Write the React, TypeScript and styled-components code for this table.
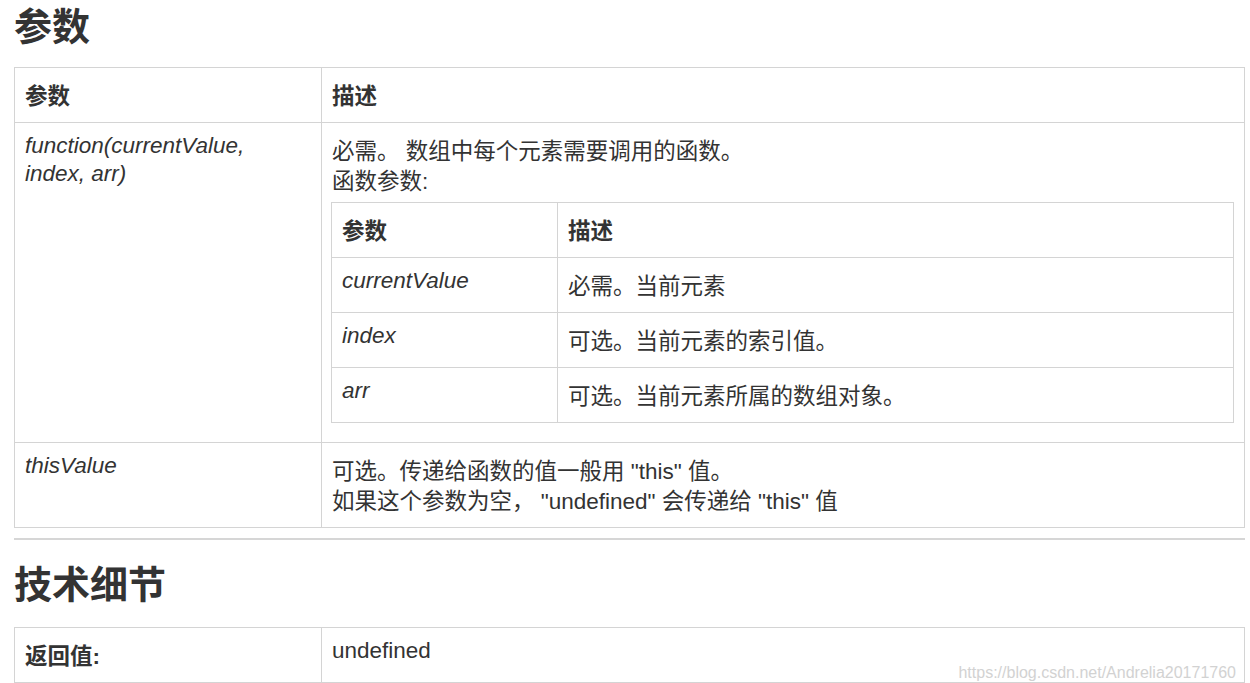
import React from 'react'
import styled, { createGlobalStyle } from 'styled-components'

const GlobalStyle = createGlobalStyle`
    html, body {
        margin: 0;
        padding: 0;
        background: #fff;
    }
    body {
        font-family: "Liberation Sans", Arial, "Noto Sans CJK SC", sans-serif;
        color: #333;
        font-size: 22.5px;
    }
`

const Page = styled.div`
    position: relative;
    padding: 0 5px 0 14px;
`

const Heading = styled.h2<{ $first?: boolean }>`
    margin: ${props => props.$first ? '2px 0 14px' : '20px 0 16px'};
    font-size: 38px;
    line-height: 51px;
    font-weight: bold;
    color: #333;
`

const Table = styled.table`
    width: 100%;
    border-collapse: collapse;
    table-layout: fixed;
`

const NestedTable = styled(Table)`
    margin: 5px 0 9px -1px;
    width: calc(100% + 1px);
`

const HeadCell = styled.th`
    border: 1px solid #d4d4d4;
    padding: 14px 10px 10px;
    line-height: 30px;
    text-align: left;
    vertical-align: top;
    font-weight: bold;
`

const NameCell = styled.td<{ $italic?: boolean }>`
    border: 1px solid #d4d4d4;
    padding: 9px 10px 10px;
    line-height: 28px;
    vertical-align: top;
    font-style: ${props => props.$italic ? 'italic' : 'normal'};
`

const DescCell = styled.td`
    border: 1px solid #d4d4d4;
    padding: 14px 10px 10px;
    line-height: 30px;
    vertical-align: top;
`

const Divider = styled.hr`
    margin: 10px 0 0;
    border: 0;
    height: 2px;
    background: #d6d6d6;
`

const Watermark = styled.div`
    position: absolute;
    top: 661px;
    right: 14px;
    font-size: 16px;
    line-height: 20px;
    color: #d2d2d2;
`

const params = [
    { name: 'currentValue', desc: '必需。当前元素' },
    { name: 'index', desc: '可选。当前元素的索引值。' },
    { name: 'arr', desc: '可选。当前元素所属的数组对象。' },
]

export default function App() {
    return (
        <Page>
            <GlobalStyle />
            <Heading $first>参数</Heading>
            <Table>
                <colgroup>
                    <col style={{ width: 307 }} />
                    <col />
                </colgroup>
                <thead>
                    <tr>
                        <HeadCell>参数</HeadCell>
                        <HeadCell>描述</HeadCell>
                    </tr>
                </thead>
                <tbody>
                    <tr>
                        <NameCell $italic>function(currentValue,<br />index, arr)</NameCell>
                        <DescCell>
                            必需。 数组中每个元素需要调用的函数。<br />
                            函数参数:
                            <NestedTable>
                                <colgroup>
                                    <col style={{ width: 226 }} />
                                    <col />
                                </colgroup>
                                <thead>
                                    <tr>
                                        <HeadCell>参数</HeadCell>
                                        <HeadCell>描述</HeadCell>
                                    </tr>
                                </thead>
                                <tbody>
                                    {params.map(p => (
                                        <tr key={p.name}>
                                            <NameCell $italic>{p.name}</NameCell>
                                            <DescCell>{p.desc}</DescCell>
                                        </tr>
                                    ))}
                                </tbody>
                            </NestedTable>
                        </DescCell>
                    </tr>
                    <tr>
                        <NameCell $italic>thisValue</NameCell>
                        <DescCell>
                            可选。传递给函数的值一般用 "this" 值。<br />
                            如果这个参数为空， "undefined" 会传递给 "this" 值
                        </DescCell>
                    </tr>
                </tbody>
            </Table>
            <Divider />
            <Heading>技术细节</Heading>
            <Table>
                <colgroup>
                    <col style={{ width: 307 }} />
                    <col />
                </colgroup>
                <tbody>
                    <tr>
                        <HeadCell>返回值:</HeadCell>
                        <NameCell>undefined</NameCell>
                    </tr>
                </tbody>
            </Table>
            <Watermark>https://blog.csdn.net/Andrelia20171760</Watermark>
        </Page>
    )
}
